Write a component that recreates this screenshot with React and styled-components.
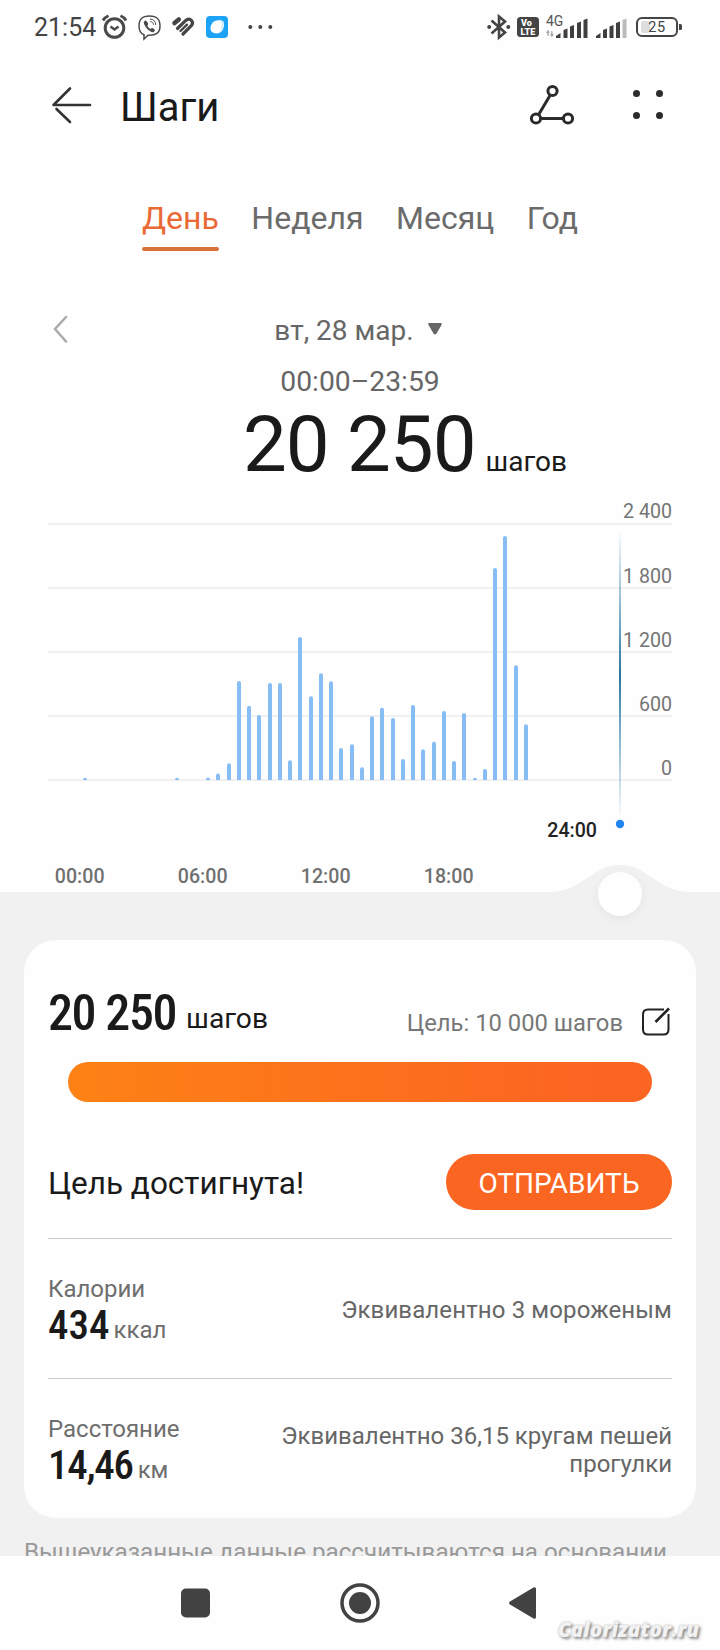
import React from "react";
import styled, { createGlobalStyle } from "styled-components";

const GlobalStyle = createGlobalStyle`
  * {
    box-sizing: border-box;
  }
  body {
    margin: 0;
    background-color: #fefefe;
    font-family: Roboto, "Liberation Sans", sans-serif;
    color: #1a1a1a;
  }
`;

const Screen = styled.div`
  width: 720px;
  height: 1650px;
  display: flex;
  flex-direction: column;
  overflow: hidden;
  background-color: #fefefe;
`;

const StatusBar = styled.div`
  height: 54px;
  padding: 0 38px 0 34px;
  display: flex;
  justify-content: space-between;
`;

const StatusGroup = styled.div`
  display: flex;
  align-items: center;
`;

const Clock = styled.span`
  width: 68px;
  padding-top: 1px;
  font-size: 25px;
  color: #444;
`;

const StatusIcon = styled.svg`
  display: block;
  flex: none;
  overflow: visible;
  margin-left: ${(props) => props.$gap || 0}px;
`;

const Header = styled.header`
  height: 100px;
  padding: 2px 56px 0 52px;
  display: flex;
  align-items: center;
`;

const Title = styled.h1`
  flex: 1;
  margin: 5px 0 0 28px;
  font-size: 40px;
  font-weight: 400;
`;

const Icon = styled.svg`
  display: block;
  flex: none;
  overflow: visible;
`;

const HeaderActions = styled.div`
  display: flex;
  align-items: center;
  gap: 58px;
`;

const Tabs = styled.nav`
  margin-top: 44px;
  display: flex;
  justify-content: center;
  gap: 32.5px;
`;

const Tab = styled.div`
  height: 53px;
  font-size: 32px;
  line-height: 40px;
  color: ${(props) => (props.$active ? "#ea6a35" : "#6b6b6b")};

  &::after {
    content: "";
    display: ${(props) => (props.$active ? "block" : "none")};
    height: 4px;
    margin-top: 9px;
    border-radius: 2px;
    background-color: #d9713b;
  }
`;

const DateRow = styled.div`
  height: 40px;
  margin-top: 60px;
  padding: 0 53px;
  display: grid;
  grid-template-columns: 14px 1fr 18px;
  align-items: center;
`;

const DateLabel = styled.div`
  display: flex;
  justify-content: center;
  align-items: center;
  gap: 14px;
  font-size: 28px;
  line-height: 40px;
  color: #666;

  svg {
    margin-bottom: 2px;
  }
`;

const TimeRange = styled.div`
  margin-top: 11px;
  font-size: 28.3px;
  line-height: 40px;
  text-align: center;
  color: #666;
`;

const Total = styled.div`
  height: 88px;
  padding-left: 243px;
  display: flex;
  align-items: baseline;
  line-height: 86px;
`;

const TotalValue = styled.span`
  font-size: 78px;
  letter-spacing: -1px;
`;

const Unit = styled.span`
  margin-left: ${(props) => props.$gap}px;
  font-size: ${(props) => props.$size}px;
  color: ${(props) => props.$color || "#1a1a1a"};
  transform: translateY(-${(props) => props.$lift || 0}px);
`;

const Chart = styled.svg`
  display: block;
  flex: none;
  font-size: 19.6px;
`;

const Content = styled.main`
  height: 626px;
  flex: none;
  padding: 10px 24px 0;
  overflow: hidden;
  background-color: #f1f1f1;
`;

const Card = styled.section`
  height: 578px;
  padding: 0 24px;
  border-radius: 32px;
  background-color: #fefefe;
`;

const GoalRow = styled.div`
  height: 122px;
  padding-top: 55px;
  display: flex;
  justify-content: space-between;
`;

const Measure = styled.div`
  display: flex;
  align-items: baseline;
  line-height: ${(props) => props.$line}px;
`;

const Digits = styled.span`
  font-size: ${(props) => props.$size}px;
  font-family: "Roboto Condensed", Roboto, sans-serif;
  font-stretch: 75%;
  font-weight: 500;
  letter-spacing: ${(props) => props.$spacing || 0}px;
`;

const Goal = styled.div`
  display: flex;
  align-items: center;
  height: 56px;
  gap: 20px;
  font-size: 23.8px;
  color: #777;

  svg {
    margin-bottom: 3px;
  }
`;

const Progress = styled.div`
  height: 40px;
  margin: 0 20px;
  border-radius: 20px;
  background: linear-gradient(to right, #fd8215, #fc6422 90%);
`;

const Achieved = styled.div`
  height: 136px;
  padding-top: 52px;
  display: flex;
  justify-content: space-between;
  font-size: 31.5px;
  line-height: 60px;
`;

const SendButton = styled.button`
  width: 226px;
  height: 56px;
  padding: 2px 0 0;
  border: 0;
  border-radius: 28px;
  background-color: #fb6522;
  color: #fff;
  font-family: inherit;
  font-size: 28px;
`;

const Stat = styled.div`
  height: 140px;
  border-top: 1px solid #c8c8c8;
  display: flex;
  justify-content: space-between;
`;

const StatName = styled.div`
  padding-top: 36px;
  font-size: 24px;
  line-height: 28px;
  color: #6e6e6e;
`;

const Equivalent = styled.div`
  width: 400px;
  height: 140px;
  padding-top: 2px;
  display: flex;
  align-items: center;
  justify-content: flex-end;
  text-align: right;
  font-size: 24px;
  line-height: 28px;
  letter-spacing: ${(props) => props.$spacing || 0}px;
  color: #666;
`;

const Note = styled.p`
  margin: 18px 0 0;
  font-size: 24.2px;
  line-height: 32px;
  white-space: nowrap;
  color: #999;
`;

const NavBar = styled.footer`
  flex: 1;
  position: relative;
  padding: 27px 184px 0 181px;
  display: flex;
  justify-content: space-between;
  align-items: flex-start;
`;

const Watermark = styled.span`
  position: absolute;
  right: 21px;
  bottom: 7px;
  font-family: "Open Sans", sans-serif;
  font-size: 20.5px;
  line-height: 28px;
  font-weight: 800;
  font-style: italic;
  color: #f2f2f2;
  text-shadow: 0 0 2px #aaa, 2px 2px 3px #888;
`;

const tabs = ["День", "Неделя", "Месяц", "Год"];

// steps per half hour, starting at midnight
const steps = [
  20, 0, 0, 0, 0, 0, 0, 0, 0, 20, 0, 0, 24, 60, 157, 928, 697, 609, 909, 909,
  185, 1341, 785, 1000, 925, 300, 335, 119, 597, 678, 581, 197, 703, 288, 359,
  647, 178, 628, 20, 103, 1988, 2288, 1075, 522,
];

const scale = ["2 400", "1 800", "1 200", "600", "0"];
const hours = ["00:00", "06:00", "12:00", "18:00"];

const StepsChart = () => (
  <Chart width="720" height="440" viewBox="0 0 720 440">
    <defs>
      <linearGradient id="cursor" x1="0" y1="0" x2="0" y2="1">
        <stop offset="0" stopColor="#2c7fae" stopOpacity="0" />
        <stop offset="0.5" stopColor="#27759f" />
        <stop offset="1" stopColor="#2c7fae" stopOpacity="0" />
      </linearGradient>
      <filter id="knob" x="-50%" y="-50%" width="200%" height="200%">
        <feDropShadow dx="0" dy="3" stdDeviation="4" floodOpacity="0.05" />
      </filter>
    </defs>
    {scale.map((label, i) => (
      <g key={label}>
        <rect x="48" y={33 + i * 64} width="624" height="2" fill="#f0f0f0" />
        <text x="672" y={28.3 + i * 64.25} textAnchor="end" fill="#757575">
          {label}
        </text>
      </g>
    ))}
    {steps.map((value, i) => {
      if (!value) return null;
      const height = (value * 64) / 600;
      const x = Math.round(83.2 + i * 10.25);
      return (
        <path
          key={i}
          d={`M${x} 290v${2 - height}q0 -2 2 -2t2 2v${height - 2}z`}
          fill="#87bdf5"
        />
      );
    })}
    <rect x="619" y="38" width="2" height="292" fill="url(#cursor)" />
    <circle cx="620" cy="334" r="4.2" fill="#2283f2" />
    <text x="597" y="347" textAnchor="end" fontWeight="500" fill="#222">
      24:00
    </text>
    {hours.map((hour, i) => (
      <text
        key={hour}
        x={79.7 + i * 123}
        y="393"
        textAnchor="middle"
        fontWeight="500"
        fill="#707070"
      >
        {hour}
      </text>
    ))}
    <path
      d="M0 402H550C582 402 592 375 620 375S658 402 690 402H720V440H0Z"
      fill="#f1f1f1"
    />
    <circle cx="620" cy="404" r="22" fill="#fefefe" filter="url(#knob)" />
  </Chart>
);

const StatusIcons = () => (
  <StatusGroup>
    <Clock>21:54</Clock>
    <StatusIcon width="25" height="26" viewBox="0 0 25 26" fill="none" stroke="#4a4a4a">
      <circle cx="12.5" cy="14" r="9.3" strokeWidth="3" />
      <path d="M8.5 12.5l4 3 4-3" strokeWidth="2.5" />
      <path d="M1 6.5C2 4.5 4 2.8 6.5 1.8M24 6.5C23 4.5 21 2.8 18.5 1.8" strokeWidth="2.8" />
    </StatusIcon>
    <StatusIcon $gap={11} width="23" height="26" viewBox="0 0 23 26" fill="none" stroke="#4a4a4a">
      <path d="M11.5 2C4 2 1 5 1 12c0 5 1.5 7.5 5 8.7V25l4-3.8C18 21.5 22 19 22 12 22 5 19 2 11.5 2z" strokeWidth="1.5" />
      <path d="M7.2 6.5C5.5 7.5 5.5 9 6.5 11c1.7 3.3 4 5.5 7 7 1.5.7 2.5.2 3.5-1.5.3-.8-2.5-2.8-3.3-2.5l-1.2 1c-1.5-.7-2.7-2-3.2-3.5l1-1.2C10.5 9.5 8.2 6.3 7.2 6.5z" fill="#4a4a4a" stroke="none" />
      <path d="M12 5c3.5.2 5.8 2.5 5.8 6M12.3 7.5c2 .2 3 1.3 3.2 3.3" strokeWidth="1" />
    </StatusIcon>
    <StatusIcon $gap={11} width="22" height="20" viewBox="0 0 22 20" fill="none" stroke="#454545" strokeLinecap="round">
      <path d="M2.5 6L6.800 2.500" strokeWidth="4.500" />
      <path d="M5.500 11.500L13.500 3.700Q17 .800 19.500 3.500Q21.500 6 19.500 8.500L11 17" strokeWidth="3.200" />
      <path d="M8.500 14L15 7.700" strokeWidth="2.400" />
    </StatusIcon>
    <StatusIcon $gap={12} width="22" height="22" viewBox="0 0 22 22">
      <rect width="22" height="22" rx="4" fill="#1ca3f5" />
      <path d="M11 4.5c3-.5 5.500 0 6.500 1.200 1 3 .5 6-1 8.500-2 3-6 4-8.500 2.800C4.500 16 3.800 12.500 5 9.500 6 6.500 8 5 11 4.500z" fill="#fff" />
      <path d="M15 5c1.500 0 2.500.5 2.500 1.500.5 4-1 8-4.500 10 3-4 3.500-8 2-11.500z" fill="#c9e8fd" />
    </StatusIcon>
    <StatusIcon $gap={20} width="25" height="6" viewBox="0 0 25 6" fill="#444">
      <circle cx="2.3" cy="3" r="2" />
      <circle cx="12.3" cy="3" r="2" />
      <circle cx="22.3" cy="3" r="2" />
    </StatusIcon>
  </StatusGroup>
);

const SystemIcons = () => (
  <StatusGroup>
    <StatusIcon width="24" height="26" viewBox="0 0 24 26" fill="none" stroke="#444" strokeWidth="2.6">
      <path d="M4.5 6.500L18 18.500 12 23.500V2.500L18 7.500 4.500 19.500" />
      <circle cx="2.2" cy="13" r="2" fill="#444" stroke="none" />
      <circle cx="21.3" cy="13" r="2" fill="#444" stroke="none" />
    </StatusIcon>
    <StatusIcon $gap={6} width="22" height="20" viewBox="0 0 22 20">
      <rect width="22" height="20" rx="3.5" fill="#444" />
      <text x="4" y="9" fontSize="9" fontWeight="900" fill="#fff">
        Vo
      </text>
      <text x="3.5" y="17.5" fontSize="9" fontWeight="900" fill="#fff">
        LTE
      </text>
    </StatusIcon>
    <StatusIcon $gap={7} width="42" height="24" viewBox="0 0 42 24" fill="#3f3f3f">
      <text x="0" y="11" fontSize="14" fill="#555">
        4G
      </text>
      <path d="M2 21V16M0.5 18.2L2 16l1.2 2M5.8 16v5M4.5 19l1.3 2 1.5-2" fill="none" stroke="#aaa" strokeWidth="1.3" />
      <path d="M10 23v-2l4.500-3v5zM17.500 23v-8l4-1.500V23zM24 23V11.500l4-1.500v13zM31 23V8l4-1.500V23zM37.500 23V5L41.500 3.500V23z" />
    </StatusIcon>
    <StatusIcon $gap={8} width="31" height="24" viewBox="0 0 31 24" fill="#3f3f3f">
      <path d="M0 23v-2l4.500-3v5zM7 23v-8l4-1.500V23zM13.500 23V11.500l4-1.500v13zM20 23V8l4-1.500V23z" />
      <path d="M26.5 23V5L30.500 3.500V23z" fill="#bbb" />
    </StatusIcon>
    <StatusIcon $gap={9} width="46" height="20" viewBox="0 0 46 20">
      <rect x="5" y="4" width="9" height="12" rx="2" fill="#ddd" />
      <rect x="1" y="1" width="40" height="18" rx="5" fill="none" stroke="#444" strokeWidth="2" />
      <path d="M43 7h1.5q1.500 0 1.500 1.500v3q0 1.500-1.500 1.500H43z" fill="#444" />
      <text x="21" y="15" fontSize="14.5" textAnchor="middle" letterSpacing="0.5" fill="#444">
        25
      </text>
    </StatusIcon>
  </StatusGroup>
);

const App = () => (
  <>
    <GlobalStyle />
    <Screen>
      <StatusBar>
        <StatusIcons />
        <SystemIcons />
      </StatusBar>
      <Header>
        <Icon width="40" height="36" viewBox="0 0 40 36" fill="none" stroke="#333" strokeWidth="2.6" strokeLinecap="round">
          <path d="M38 18H1.500L18 1.500M4.500 22L18 35" strokeLinejoin="round" />
        </Icon>
        <Title>Шаги</Title>
        <HeaderActions>
          <Icon width="44" height="40" viewBox="0 0 44 40" fill="none" stroke="#2b2b2b" strokeWidth="3">
            <path d="M20 10.500L9 29M11 33.500H33" />
            <circle cx="22.500" cy="6" r="4.600" />
            <circle cx="6" cy="33.500" r="4.600" />
            <circle cx="38" cy="33.500" r="4.600" />
          </Icon>
          <Icon width="32" height="30" viewBox="0 0 32 30" fill="#2b2b2b">
            <circle cx="4.500" cy="3.500" r="3.500" />
            <circle cx="27.500" cy="3.500" r="3.500" />
            <circle cx="4.500" cy="25.500" r="3.500" />
            <circle cx="27.500" cy="25.500" r="3.500" />
          </Icon>
        </HeaderActions>
      </Header>
      <Tabs>
        {tabs.map((tab, i) => (
          <Tab key={tab} $active={i === 0}>
            {tab}
          </Tab>
        ))}
      </Tabs>
      <DateRow>
        <Icon width="14" height="30" viewBox="0 0 14 30" fill="none" stroke="#aaa" strokeWidth="2.5" strokeLinecap="round">
          <path d="M13 1L2 13L13 25.500" />
        </Icon>
        <DateLabel>
          вт, 28 мар.
          <Icon width="14" height="16" viewBox="0 0 14 16" fill="#666">
            <path d="M1 1H13Q14.500 1 13.500 3L8.500 11.500Q7 13.500 5.500 11.500L0.500 3Q-.5 1 1 1Z" />
          </Icon>
        </DateLabel>
      </DateRow>
      <TimeRange>00:00–23:59</TimeRange>
      <Total>
        <TotalValue>20 250</TotalValue>
        <Unit $gap={10} $size={28}>
          шагов
        </Unit>
      </Total>
      <StepsChart />
      <Content>
        <Card>
          <GoalRow>
            <Measure $line={36}>
              <Digits $size={50} $spacing={-1.4}>
                20 250
              </Digits>
              <Unit $gap={10} $size={28.2} $lift={2}>
                шагов
              </Unit>
            </Measure>
            <Goal>
              Цель: 10 000 шагов
              <Icon width="29" height="28" viewBox="0 0 29 28" fill="none" stroke="#222" strokeWidth="2">
                <path d="M21 1.500H5Q0 1.500 0 6.500V21.500Q0 26.500 5 26.500H20.500Q25.500 26.500 25.500 21.500V6" />
                <path d="M12.500 14L26 .5" strokeWidth="2.6" />
              </Icon>
            </Goal>
          </GoalRow>
          <Progress />
          <Achieved>
            Цель достигнута!
            <SendButton>ОТПРАВИТЬ</SendButton>
          </Achieved>
          <Stat>
            <div>
              <StatName>Калории</StatName>
              <Measure $line={44}>
                <Digits $size={41}>434</Digits>
                <Unit $gap={4} $size={24} $color="#6e6e6e" $lift={1}>
                  ккал
                </Unit>
              </Measure>
            </div>
            <Equivalent $spacing={0.12}>Эквивалентно 3 мороженым</Equivalent>
          </Stat>
          <Stat>
            <div>
              <StatName>Расстояние</StatName>
              <Measure $line={44}>
                <Digits $size={41} $spacing={-1.3}>
                  14,46
                </Digits>
                <Unit $gap={5} $size={24} $color="#6e6e6e" $lift={1}>
                  км
                </Unit>
              </Measure>
            </div>
            <Equivalent>Эквивалентно 36,15 кругам пешей прогулки</Equivalent>
          </Stat>
        </Card>
        <Note>Вышеуказанные данные рассчитываются на основании</Note>
      </Content>
      <NavBar>
        <Icon width="29" height="40" viewBox="0 0 29 40">
          <rect y="5.500" width="29" height="29" rx="5" fill="#424242" />
        </Icon>
        <Icon width="40" height="40" viewBox="0 0 40 40">
          <circle cx="20" cy="20" r="18" fill="none" stroke="#424242" strokeWidth="3.5" />
          <circle cx="20" cy="20" r="11" fill="#424242" />
        </Icon>
        <Icon width="27" height="40" viewBox="0 0 27 40">
          <path d="M1 18.500L24.500 4.500Q27 3.500 27 6V34Q27 36.500 24.500 35.500L1 21.500Q-1 20 1 18.500Z" fill="#424242" />
        </Icon>
        <Watermark>Calorizator.ru</Watermark>
      </NavBar>
    </Screen>
  </>
);

export default App;
